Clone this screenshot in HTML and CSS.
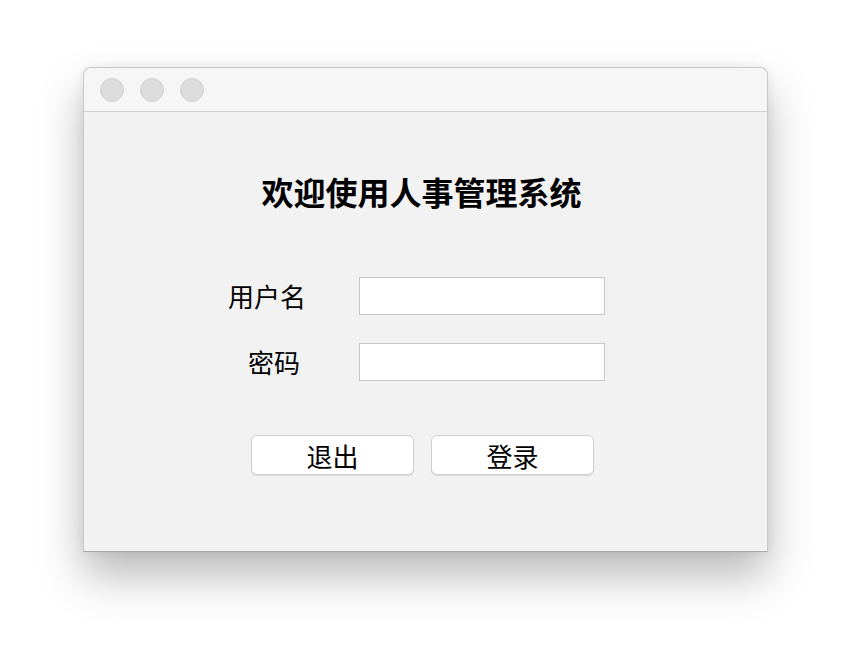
FILE: index.html
```html
<!DOCTYPE html>
<html>
<head>
    <meta charset="utf-8">
    <title>人事管理系统 - 登录</title>
    <link rel="stylesheet" href="styles.css">
</head>
<body>
    <div class="window">
        <div class="titlebar">
            <span class="dot"></span>
            <span class="dot"></span>
            <span class="dot"></span>
        </div>

        <div class="content">
            <h1 class="title">欢迎使用人事管理系统</h1>

            <div class="form">
                <label class="label" for="username">用户名</label>
                <input class="field" type="text" id="username">

                <label class="label label-short" for="password">密码</label>
                <input class="field" type="password" id="password">
            </div>

            <div class="actions">
                <button class="button">退出</button>
                <button class="button">登录</button>
            </div>
        </div>
    </div>
</body>
</html>
```

FILE: styles.css
```css
body {
    margin: 0;
    min-height: 650px;
    padding-top: 67px;
    box-sizing: border-box;
    background-color: #ffffff;
    font-family: "Noto Sans CJK SC", "Noto Sans", sans-serif;
    color: #000;
}

.window {
    width: 683px;
    margin-left: 83px;
    border: 1px solid #c9c9c9;
    border-bottom-color: #a8a8a8;
    border-radius: 8px 8px 0 0;
    background-color: #f2f2f2;
    box-shadow: 0 24px 45px rgba(0, 0, 0, 0.28), 0 0 10px rgba(0, 0, 0, 0.07);
}

.titlebar {
    display: flex;
    align-items: center;
    gap: 16px;
    height: 43px;
    padding-left: 16px;
    background-color: #f6f6f6;
    border-bottom: 1px solid #d2d2d2;
    border-radius: 8px 8px 0 0;
}

.dot {
    width: 24px;
    height: 24px;
    border-radius: 50%;
    background-color: #dcdcdc;
    border: 1px solid #d2d2d2;
    box-sizing: border-box;
}

.content {
    height: 438px;
    padding-top: 1px;
}

.title {
    margin: 58px 0 0 0;
    font-size: 32px;
    line-height: 40px;
    font-weight: bold;
    text-align: center;
    padding-right: 8px;
}

.form {
    display: grid;
    grid-template-columns: 90px 246px;
    column-gap: 47px;
    row-gap: 28px;
    align-items: center;
    margin: 66px 0 0 138px;
}

.label {
    font-size: 26px;
    line-height: 38px;
    text-align: center;
}

.label-short {
    padding-left: 14px;
}

.field {
    box-sizing: border-box;
    width: 246px;
    height: 38px;
    margin: 0;
    border: 1px solid #c6c6c6;
    background-color: #fff;
    outline: none;
    font-size: 18px;
}

.actions {
    display: flex;
    gap: 17px;
    margin: 54px 0 0 167px;
}

.button {
    width: 163px;
    height: 40px;
    padding: 0;
    border: 1px solid #d0d0d0;
    border-radius: 6px;
    background-color: #fff;
    box-shadow: 0 1px 1px rgba(0, 0, 0, 0.12);
    font-family: "Noto Sans CJK SC", "Noto Sans", sans-serif;
    font-size: 26px;
    color: #000;
}
```
